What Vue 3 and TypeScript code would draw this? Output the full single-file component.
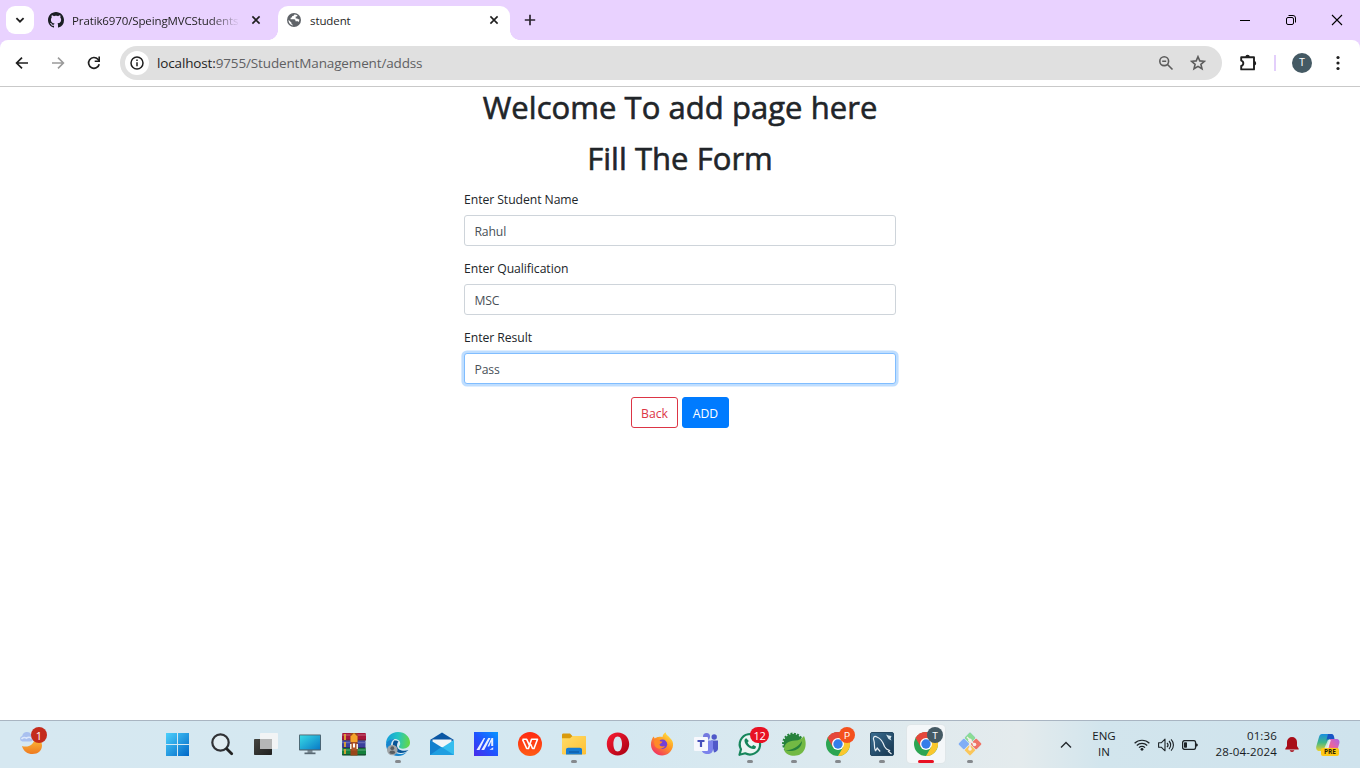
<script setup lang="ts">
import { ref } from 'vue'

interface Field {
  id: string
  label: string
  value: string
  focused?: boolean
}

const fields = ref<Field[]>([
  { id: 'name', label: 'Enter Student Name', value: 'Rahul' },
  { id: 'qualification', label: 'Enter Qualification', value: 'MSC' },
  { id: 'result', label: 'Enter Result', value: 'Pass', focused: true },
])
</script>

<template>
  <div class="screen">
    <header class="tabstrip">
      <button class="tab-search" aria-label="Search tabs">
        <svg width="10" height="10" viewBox="0 0 10 10"><path d="M1.4 3.2 5 6.7 8.6 3.2" fill="none" stroke="#1f1f1f" stroke-width="1.8" /></svg>
      </button>
      <div class="tab idle">
        <svg width="16" height="16" viewBox="0 0 16 16"><path fill="#1b1f24" d="M8 0C3.58 0 0 3.58 0 8c0 3.54 2.29 6.53 5.47 7.59.4.07.55-.17.55-.38 0-.19-.01-.82-.01-1.49-2.01.37-2.53-.49-2.69-.94-.09-.23-.48-.94-.82-1.13-.28-.15-.68-.52-.01-.53.63-.01 1.08.58 1.23.82.72 1.21 1.87.87 2.33.66.07-.52.28-.87.51-1.07-1.78-.2-3.64-.89-3.64-3.95 0-.87.31-1.59.82-2.15-.08-.2-.36-1.02.08-2.12 0 0 .67-.21 2.2.82.64-.18 1.32-.27 2-.27s1.36.09 2 .27c1.53-1.04 2.2-.82 2.2-.82.44 1.1.16 1.92.08 2.12.51.56.82 1.27.82 2.15 0 3.07-1.87 3.75-3.65 3.95.29.25.54.73.54 1.48 0 1.07-.01 1.93-.01 2.2 0 .21.15.46.55.38A8.01 8.01 0 0 0 16 8c0-4.42-3.58-8-8-8z" /></svg>
        <span class="tab-title faded">Pratik6970/SpeingMVCStudents</span>
        <svg class="close" width="10" height="10" viewBox="0 0 10 10"><path d="M1.4 1.4 8.600 8.600M8.600 1.400 1.400 8.600" stroke="#1f1f1f" stroke-width="1.600" /></svg>
      </div>
      <div class="tab active">
        <svg width="14" height="14" viewBox="0 0 14 14"><circle cx="7" cy="7" r="7" fill="#5f6368" /><path d="M7.300 1.600c-.2 1.200-1 1.500-2.200 1.600-.2 1-.6 1.500-1.500 1.600v1.500h3.600c1 0 1.300.8 1.300 1.900h1.700c.9 0 1.300.4 1.500 1 .5-1 .7-2 .5-3.100-.8.500-1.600.1-1.800-.7H8.700V3.600h1.400c0-.6.200-1 .5-1.200-1-.6-2.200-.9-3.300-.8zM1.500 6.700l3 3v.8c0 .6.500 1 1.200 1v1c-2.500-.5-4.400-2.800-4.200-5.800z" fill="#fff" /></svg>
        <span class="tab-title student">student</span>
        <svg class="close" width="10" height="10" viewBox="0 0 10 10"><path d="M1.400 1.400 8.600 8.600M8.600 1.400 1.400 8.600" stroke="#1f1f1f" stroke-width="1.600" /></svg>
      </div>
      <svg class="new-tab" width="12" height="12" viewBox="0 0 12 12"><path d="M6 .8v10.400M.8 6h10.400" stroke="#2b2530" stroke-width="1.700" /></svg>
      <div class="window-controls">
        <svg width="46" height="40" viewBox="0 0 46 40"><path d="M18 20.500h10" stroke="#000" /></svg>
        <svg width="46" height="40" viewBox="0 0 46 40"><g fill="none" stroke="#000"><rect x="18.500" y="17.500" width="7" height="7" rx="1.500" /><path d="M20.500 15.500h4.500a2.500 2.500 0 0 1 2.500 2.500v4.500" /></g></svg>
        <svg width="46" height="40" viewBox="0 0 46 40"><path d="M18 15l10 10M28 15 18 25" stroke="#000" stroke-width="1.100" /></svg>
      </div>
    </header>

    <nav class="toolbar">
      <svg class="nav-icon" width="16" height="16" viewBox="0 0 16 16"><path d="M14 8H3M8 2.600 2.600 8 8 13.400" fill="none" stroke="#1f1f1f" stroke-width="1.700" /></svg>
      <svg class="nav-icon" width="16" height="16" viewBox="0 0 16 16"><path d="M2 8h11M8 2.600 13.400 8 8 13.400" fill="none" stroke="#9a9a9a" stroke-width="1.600" /></svg>
      <svg class="nav-icon" width="16" height="16" viewBox="0 0 16 16"><path d="M13.200 9.200A5.400 5.400 0 1 1 12 4.300L13.400 5.700" fill="none" stroke="#1f1f1f" stroke-width="1.700" /><path d="M14 1.600V7H8.700V5.400h3.700V1.600z" fill="#1f1f1f" /></svg>
      <div class="omnibox">
        <span class="site-info"><svg width="14" height="14" viewBox="0 0 14 14"><circle cx="7" cy="7" r="6" fill="none" stroke="#1f1f1f" stroke-width="1.500" /><path d="M7 6.200v4M7 3.600v1.500" stroke="#1f1f1f" stroke-width="1.500" /></svg></span>
        <span class="url"><b>localhost:</b>9755/StudentManagement/addss</span>
        <svg class="zoom-icon" width="16" height="16" viewBox="0 0 16 16"><g fill="none" stroke="#5c5c5c" stroke-width="1.600"><circle cx="6.200" cy="6.200" r="4.400" /><path d="M9.500 9.500l5 5M4.200 6.200h4" /></g></svg>
        <svg class="star-icon" width="16" height="16" viewBox="0 0 16 16"><path d="M8 1.700 9.800 5.900l4.600.4-3.500 3 1.100 4.500L8 11.400l-4 2.400 1.100-4.500-3.500-3 4.600-.4z" fill="none" stroke="#5c5c5c" stroke-width="1.600" /></svg>
      </div>
      <svg class="ext-icon" width="18" height="18" viewBox="0 0 18 18"><path d="M2.200 3.200H15v12.200H2.200V12c2.800-.7 2.800-4.700 0-5.400z" fill="none" stroke="#1f1f1f" stroke-width="1.900" stroke-linejoin="round" /><path d="M6.400 3a2.200 2.200 0 0 1 4.400 0zM15 7.100a2.200 2.200 0 0 1 0 4.400z" fill="#1f1f1f" /></svg>
      <i class="divider"></i>
      <span class="profile">T</span>
      <svg class="kebab" width="4" height="16" viewBox="0 0 4 16"><g fill="#1f1f1f"><circle cx="2" cy="2.500" r="1.600" /><circle cx="2" cy="8" r="1.600" /><circle cx="2" cy="13.500" r="1.600" /></g></svg>
    </nav>

    <main class="page">
      <h1 class="welcome">Welcome To add page here</h1>
      <h1 class="fill">Fill The Form</h1>
      <form @submit.prevent>
        <div v-for="f in fields" :key="f.id" class="group">
          <label :for="f.id">{{ f.label }}</label>
          <input :id="f.id" v-model="f.value" type="text" :class="{ focused: f.focused }" />
        </div>
        <div class="actions">
          <button type="button" class="btn outline">Back</button>
          <button type="submit" class="btn primary">ADD</button>
        </div>
      </form>
    </main>

    <footer class="taskbar">
      <div class="weather">
        <svg width="28" height="28" viewBox="0 0 28 28">
          <defs><linearGradient id="moon" x1="0" y1="0" x2="0" y2="1"><stop offset="0" stop-color="#ffc23c" /><stop offset="1" stop-color="#ee7a20" /></linearGradient></defs>
          <path d="M3 18c6 2 12.500-1 13-9 4.500 1 7 4.500 7 8.500 0 5-4 8.500-9.500 8.500-5 0-9-2.500-10.500-8z" fill="url(#moon)" />
          <path d="M3.500 13.500a2.800 2.800 0 0 1-.3-5.500 4.900 4.900 0 0 1 9-1.600c1.800.5 2.300 2 2.200 3.600-.1 2-1.200 3.500-3 3.500z" fill="#a9c0ef" />
          <path d="M2.500 11c1.500-2 3.500-2 5-.7 1.500-1.600 4-1.500 5 .2" fill="none" stroke="#dce7fb" stroke-width="1.500" />
        </svg>
        <span class="badge red">1</span>
      </div>

      <div class="apps">
        <div class="app">
          <svg viewBox="0 0 24 24"><defs><linearGradient id="win" x1="0" y1="0" x2="1" y2="1"><stop offset="0" stop-color="#4cd0fc" /><stop offset="1" stop-color="#0067c7" /></linearGradient></defs><path d="M0 1h11v11H0zM12 1h11v11H12zM0 13h11v11H0zM12 13h11v11H12z" fill="url(#win)" /></svg>
        </div>
        <div class="app">
          <svg viewBox="0 0 24 24"><circle cx="10.500" cy="10.500" r="8.200" fill="#e1edf2" stroke="#303236" stroke-width="2.200" /><path d="M16.700 16.700l5 5" stroke="#222" stroke-width="2.800" stroke-linecap="round" /></svg>
        </div>
        <div class="app">
          <svg viewBox="0 0 24 24"><defs><linearGradient id="desk" x1="0" y1="0" x2="1" y2="1"><stop offset="0" stop-color="#454541" /><stop offset="1" stop-color="#20201f" /></linearGradient></defs><rect x="0" y="7" width="18" height="16" rx=".8" fill="url(#desk)" /><rect x="6" y="1" width="18" height="16" rx=".8" fill="#f2f4f5" /><path d="M6 7h12v10H6z" fill="#b5b6b6" /></svg>
        </div>
        <div class="app">
          <svg viewBox="0 0 24 24"><defs><linearGradient id="pc" x1="0" y1="0" x2="1" y2="1"><stop offset="0" stop-color="#38d9e5" /><stop offset="1" stop-color="#087ac6" /></linearGradient></defs><path d="M9.500 18h5v3h-5z" fill="#7d8b94" /><path d="M6.500 20.500h11v1.700h-11z" fill="#586873" /><rect x="1" y="2.500" width="22" height="16" rx=".8" fill="#50606b" /><rect x="1.900" y="3.400" width="20.200" height="14" fill="url(#pc)" /></svg>
        </div>
        <div class="app">
          <svg viewBox="0 0 24 24"><rect x="0" y="1" width="24" height="7.500" rx="1.200" fill="#a5163a" /><rect x="0" y="8.500" width="23.500" height="7.500" rx="1.200" fill="#3a3f9e" /><rect x="0" y="16" width="24" height="7.500" rx="1.200" fill="#14803c" /><path d="M0 3h24M0 10.500h23M0 18h24" stroke="#fff" stroke-opacity=".22" stroke-width="1.300" /><path d="M0 8.200h24M0 15.800h24M0 22.800h24" stroke="#22152a" stroke-opacity=".6" /><path d="M3 2v6M3 10v5M3 17v5" stroke="#e0a632" stroke-width="1.800" /><rect x="8.500" y="1" width="7" height="22.500" fill="#99461a" /><path d="M8.500 4.500 12 1l3.500 3.500v5.500h-7z" fill="#f4a32b" /><path d="M8 12h8v5H8z" fill="#f6edda" /><path d="M9.500 10.500h5v8h-5z" fill="#ae5428" /><path d="M11 11.500h2v4h-2z" fill="#fff" /></svg>
        </div>
        <div class="app running">
          <svg viewBox="0 0 24 24"><defs><linearGradient id="edgeTop" x1="0" y1=".3" x2="1" y2=".4"><stop offset="0" stop-color="#139bdd" /><stop offset=".5" stop-color="#24c5c3" /><stop offset="1" stop-color="#65d846" /></linearGradient></defs><path d="M0 12C0 5 5 0 12 0s12 5 12 10.500c0 4-3.300 6.200-7 6.200-3 0-4-1.200-4-2 0-1 1.200-1.500 1.200-3.300C14.200 8.500 11.500 7 8.700 7 4.500 7 1.500 9.500 0 12z" fill="url(#edgeTop)" /><path d="M0 12c1.500-4 5-5 8.500-5-2.500 1.300-3.500 4-3.500 6 0 5 4 9 9 9 2.500 0 5-.6 7-2.500C19 22.500 15.500 24 12 24 5 24 0 19 0 12z" fill="#1685ce" /><path d="M8.200 8.500C5 12 7.500 21.500 15 21c3 0 5.500-1.300 7.500-3-5 1.800-11.500.2-11.500-4.500 0-2.500 1.500-4 1.500-4-1-.8-2.800-1.300-4.300-1z" fill="#075496" /><circle cx="6.300" cy="18" r="5.300" fill="#a0a4a7" /><circle cx="6.300" cy="16.200" r="1.900" fill="#595d61" /><path d="M3.300 21c.5-3.200 5.500-3.200 6 0-1.500 1.400-4.500 1.400-6 0z" fill="#595d61" /></svg>
        </div>
        <div class="app">
          <svg viewBox="0 0 24 24"><path d="M0 8 12 .5 24 8l-12 7.500z" fill="#0b57a4" /><path d="M2.500 7.500h19v6L12 18 2.500 12z" fill="#f1f5f8" /><path d="M0 8l24 15H0z" fill="#1480ce" /><path d="M24 8v15L6 19.500z" fill="#35bdee" /><path d="M0 23 11.500 15 24 23z" fill="#1f9ee1" /></svg>
        </div>
        <div class="app">
          <svg viewBox="0 0 24 24"><defs><linearGradient id="armoury" x1="0" y1="1" x2="1" y2="0"><stop offset="0" stop-color="#492bea" /><stop offset=".5" stop-color="#1f55ff" /><stop offset="1" stop-color="#0796ff" /></linearGradient></defs><rect width="24" height="24" fill="url(#armoury)" /><path d="M2.500 18 9.700 6h1.500L5.500 18zM7.300 18l7-12h2.200l-6.300 12z" fill="#e9efff" /><path d="M13.500 14.500 17.500 6h1.700v8h-2V9.500l-2 5zM15.500 17.800l3.700-2.500v2.500z" fill="#e9efff" /></svg>
        </div>
        <div class="app">
          <svg viewBox="0 0 24 24"><defs><linearGradient id="wps" x1="0" y1="0" x2="0" y2="1"><stop offset="0" stop-color="#ff2a12" /><stop offset="1" stop-color="#ff5a14" /></linearGradient></defs><circle cx="12" cy="12" r="12" fill="url(#wps)" /><path d="M4.500 7.300h4.200l3 6.500M4.500 7.300l4.200 9.200h1.800l3-9.200h6l-3.500 9.200h-1.500l-2.600-6" fill="none" stroke="#fff" stroke-width="1.600" stroke-linejoin="round" /></svg>
        </div>
        <div class="app running">
          <svg viewBox="0 0 24 24"><defs><linearGradient id="folder" x1="0" y1="0" x2="1" y2="1"><stop offset="0" stop-color="#ffdc68" /><stop offset="1" stop-color="#ffc034" /></linearGradient></defs><path d="M0 3c0-1 .5-1.500 1.500-1.500h6.500L10.300 4H22c1.200 0 2 .7 2 2v16H0z" fill="#d99a0d" /><path d="M0 6.200h8l2.500-2.200H22.500c1 0 1.500.5 1.500 1.500V21c0 1-.5 1.500-1.500 1.500h-21C.5 22.500 0 22 0 21z" fill="url(#folder)" /><path d="M4 22.500V18c0-1.500.8-2.200 2.200-2.200h11.500c1.500 0 2.300.7 2.300 2.200v4.500z" fill="#167bd1" /><path d="M7 19.500h10v1H7z" fill="#075398" /></svg>
        </div>
        <div class="app">
          <svg viewBox="0 0 24 24"><defs><linearGradient id="opera" x1="0" y1="0" x2="1" y2="1"><stop offset="0" stop-color="#fb1d35" /><stop offset="1" stop-color="#a60010" /></linearGradient></defs><path d="M11.700.5C5 .5.800 5.500.800 12s4.200 11.500 10.900 11.500S23.200 18.500 23.200 12 18.400.500 11.700.500zm0 4C14.500 4.500 16 8 16 12s-1.500 7.500-4.300 7.500S7.400 16 7.400 12s1.500-7.500 4.300-7.500z" fill="url(#opera)" fill-rule="evenodd" /></svg>
        </div>
        <div class="app">
          <svg viewBox="0 0 24 24"><defs><linearGradient id="fox" x1=".9" y1="0" x2=".2" y2="1"><stop offset="0" stop-color="#fff04a" /><stop offset=".45" stop-color="#ff9a22" /><stop offset="1" stop-color="#f02867" /></linearGradient></defs><path d="M3.400 4.500C4 5 4.500 5.800 4.800 6.500 6 5.500 7.500 5 8.500 5c1-.4 2.500-.4 4 .1.300-2 1.300-3.800 3.200-4.800 0 2.500 2.500 3.500 4.500 6C22.700 8.500 23.300 11 23 13.500 22.300 19.500 17.500 23.500 12 23.500S1.300 19 1 13c-.1-3.500.8-6 2.400-8.500z" fill="url(#fox)" /><circle cx="12.500" cy="12.200" r="4.700" fill="#7440d6" /><path d="M4 9c2-2 5-1.500 6.500.5h2c-.3 1.500-2.500 2-3 3 .2 2 3 2.500 5.500 1.500C13 17.500 6 18 4.500 13z" fill="#ff8a28" /></svg>
        </div>
        <div class="app">
          <svg viewBox="0 0 24 24"><circle cx="12.500" cy="4.500" r="3.500" fill="#7379df" /><circle cx="20.200" cy="5" r="2.700" fill="#5059c9" /><path d="M17 8.500h7v8c0 2-1.500 3.500-4 4z" fill="#5059c9" /><path d="M7.500 8.500H19V17c0 3-2 5-5.500 5s-6-2-6-5z" fill="#7b83eb" /><rect x="0" y="5" width="14" height="14" rx="1" fill="#f7f8fd" /><path d="M3.500 8h7v1.900H8.100V15H5.900V9.900H3.500z" fill="#4650bb" /></svg>
        </div>
        <div class="app running">
          <svg viewBox="0 0 24 24"><path d="M1.500 22.800 3 17.200A10.200 10.200 0 1 1 7.200 21.300z" fill="#eaf5f2" stroke="#16865b" stroke-width="2.200" stroke-linejoin="round" /><path d="M8.300 6.300c-.8 0-2 1.200-1.800 2.800.5 4 5 8 9 8 1.500 0 2.500-1.200 2.500-2.700l-2.700-1.500-1.500 1.600c-2-.6-3.500-2-4.200-3.900l1.200-1.500z" fill="#16865b" /></svg>
          <span class="badge crimson">12</span>
        </div>
        <div class="app running">
          <svg viewBox="0 0 24 24"><circle cx="11" cy="11.500" r="9.400" fill="#26823c" stroke="#26823c" stroke-width="3" stroke-dasharray="1.900 1.300" /><circle cx="11" cy="11.500" r="9.200" fill="#26823c" /><path d="M2.500 19C1 11.500 7 8.700 13 8.500c4 0 7-2 9-4.500 4 9 1 19.500-9.500 19.800C8 24 4 22 2.500 19z" fill="#72b944" /><path d="M3.500 18C9 18.500 16 15.500 20 9 20 16.500 12 21 3.500 18z" fill="#26823c" /></svg>
        </div>
        <div class="app running">
          <svg viewBox="0 0 24 24"><circle cx="12" cy="12" r="12" fill="#2ca552" /><path d="M12 12 1.600 6A12 12 0 0 1 22.400 6z" fill="#e5473b" /><path d="M12 6h10.400A12 12 0 0 1 12 24l5.200-9z" fill="#fac72d" /><path d="M1.600 6A12 12 0 0 1 12 0v6L6.800 15z" fill="#e5473b" /><circle cx="12" cy="12" r="6" fill="#fff" /><circle cx="12" cy="12" r="4.700" fill="#357de9" /></svg>
          <span class="badge orange">P</span>
        </div>
        <div class="app running">
          <svg viewBox="0 0 24 24"><defs><linearGradient id="sql" x1="0" y1="0" x2="1" y2="1"><stop offset="0" stop-color="#3a6d91" /><stop offset="1" stop-color="#16354e" /></linearGradient></defs><rect x=".5" y=".5" width="23" height="23" rx="1.500" fill="url(#sql)" stroke="#244862" /><path d="M5.500 19C3.500 15 5 12 4 9 2.500 5.500 4 3.500 7 5c3.500 1.500 6 5 7.500 9.500l2 2.500 3 1.500-1 1 3 2.500M5.500 19l1.700-3 3 3.500" fill="none" stroke="#e5edf2" stroke-width="1.200" /><path d="M16 2.500l2.500 1 3 .5-1 2.500 1 2-3-1.500z" fill="#d4e6ee" /></svg>
        </div>
        <div class="app current">
          <svg viewBox="0 0 24 24"><circle cx="12" cy="12" r="12" fill="#2ca552" /><path d="M12 12 1.600 6A12 12 0 0 1 22.400 6z" fill="#e5473b" /><path d="M12 6h10.400A12 12 0 0 1 12 24l5.200-9z" fill="#fac72d" /><path d="M1.600 6A12 12 0 0 1 12 0v6L6.800 15z" fill="#e5473b" /><circle cx="12" cy="12" r="6" fill="#fff" /><circle cx="12" cy="12" r="4.700" fill="#357de9" /></svg>
          <span class="badge slate">T</span>
        </div>
        <div class="app running">
          <svg viewBox="0 0 24 24"><g transform="rotate(45 12 12)"><rect x="3.700" y="3.700" width="7.900" height="7.900" rx="1" fill="#80aef6" /><rect x="12.400" y="3.700" width="7.900" height="7.900" rx="1" fill="#ef7467" /><rect x="3.700" y="12.400" width="7.900" height="7.900" rx="1" fill="#80aef6" /><rect x="12.400" y="12.400" width="7.900" height="7.900" rx="1" fill="#fac65a" /><rect x="3.700" y="3.700" width="7.900" height="7.900" rx="1" fill="#8bdc94" /></g><path d="M9 5l3 3v9M12 8.500l4.500 4" fill="none" stroke="#f7efec" stroke-width="1.400" /><g fill="#f7efec"><circle cx="12" cy="8.300" r="1.800" /><circle cx="16.500" cy="12.500" r="1.800" /><circle cx="12" cy="17" r="1.800" /></g></svg>
        </div>
      </div>

      <div class="tray">
        <svg class="chev" width="12" height="8" viewBox="0 0 12 8"><path d="M1 6.500 6 1.500l5 5" fill="none" stroke="#24292d" stroke-width="1.400" /></svg>
        <div class="lang"><span>ENG</span><span>IN</span></div>
        <svg class="wifi" width="16" height="12" viewBox="0 0 16 12"><g fill="none" stroke="#1d2327" stroke-width="1.200"><path d="M.6 4.300a10.500 10.500 0 0 1 14.800 0M2.800 6.500a7.400 7.400 0 0 1 10.400 0M5 8.700a4.200 4.200 0 0 1 6 0" /></g><circle cx="8" cy="10.300" r="1.400" fill="#1d2327" /></svg>
        <svg class="sound" width="16" height="14" viewBox="0 0 16 14"><g fill="none" stroke="#1d2327" stroke-width="1.100"><path d="M.6 4.800h2.600L7 1.200v11.600L3.200 9.200H.6z" stroke-linejoin="round" /><path d="M9 4.800c1.200 1.200 1.200 3.200 0 4.400M11 3c2.200 2.200 2.200 5.800 0 8M13.100 1.300c3.100 3.300 3.100 8.100 0 11.400" /></g></svg>
        <svg class="battery" width="16" height="10" viewBox="0 0 16 10"><rect x=".6" y=".6" width="13" height="8.800" rx="2" fill="none" stroke="#1d2327" stroke-width="1.300" /><rect x="2" y="2.200" width="3" height="5.600" rx=".8" fill="#1d2327" /><path d="M14 3.500h.7c1.500.5 1.500 2.500 0 3H14z" fill="#1d2327" /></svg>
        <div class="clock"><span>01:36</span><span>28-04-2024</span></div>
        <svg class="bell" width="14" height="16" viewBox="0 0 14 16"><path d="M7 0a5 5 0 0 0-5 5v4L.3 11.700v.8h13.400v-.8L12 9V5a5 5 0 0 0-5-5zM4.600 13.300a2.500 2.500 0 0 0 4.800 0z" fill="#a80d18" /></svg>
        <div class="copilot">
          <svg width="24" height="24" viewBox="0 0 24 24"><defs><linearGradient id="cpl" x1="0" y1="0" x2="0" y2="1"><stop offset="0" stop-color="#178ee0" /><stop offset=".5" stop-color="#41b787" /><stop offset="1" stop-color="#e9d22f" /></linearGradient><linearGradient id="cpr" x1="1" y1="0" x2="0" y2="1"><stop offset="0" stop-color="#a965e7" /><stop offset=".5" stop-color="#ed659b" /><stop offset="1" stop-color="#f99155" /></linearGradient></defs><path d="M6 1h9l-4 14c-.5 2-1.500 3-3.500 3H4c-3 0-4.500-2-3.600-5L3 4c.5-2 1.500-3 3-3z" fill="url(#cpl)" /><path d="M12 1h3.500c2 0 2.500 1.500 3 5H13c-1.500 0-2.500 1-3 3z" fill="#1855c5" /><path d="M14 6h6c3 0 4 2 3.300 4.500L21 18c-.8 3-2 4-4 4H9c2 0 2.500-2 3-4z" fill="url(#cpr)" /><path d="M12 7h3l-3 9H8z" fill="#f3f4fa" opacity=".75" /></svg>
          <span class="pre">PRE</span>
        </div>
      </div>
    </footer>
  </div>
</template>

<style>
html,
body {
  margin: 0;
  overflow: hidden;
}
</style>

<style scoped>
.screen {
  width: 1360px;
  height: 768px;
  display: flex;
  flex-direction: column;
  background: #fff;
  overflow: hidden;
  font-family: "Open Sans", "Noto Sans", sans-serif;
  color: #1f1f1f;
}
.screen * { box-sizing: border-box; }
svg { display: block; flex: none; }

.tabstrip {
  height: 40px;
  flex: none;
  display: flex;
  align-items: center;
  background: #e9d2ff;
  padding-left: 6px;
}
.tab-search {
  width: 28px;
  height: 28px;
  padding: 0;
  border: 0;
  border-radius: 9px;
  background: #fff;
  display: flex;
  align-items: center;
  justify-content: center;
}
.tab { display: flex; align-items: center; white-space: nowrap; }
.tab.idle { width: 244px; height: 40px; padding: 0 17px 0 14px; }
.tab-title { font-size: 11.5px; line-height: 16px; margin-left: 8px; padding-top: 1px; }
.student { margin-left: 9px; letter-spacing: -0.1px; }
.faded {
  width: 168px;
  overflow: hidden;
  letter-spacing: -0.12px;
  mask-image: linear-gradient(90deg, #000 82%, transparent);
}
.close { margin-left: auto; }
.tab.active {
  position: relative;
  width: 232px;
  height: 34px;
  margin-top: 6px;
  padding: 0 11px 6px 9px;
  border-radius: 10px 10px 0 0;
  background: #fff;
}
.tab.active::before,
.tab.active::after {
  content: "";
  position: absolute;
  bottom: 0;
  width: 10px;
  height: 10px;
}
.tab.active::before { left: -10px; background: radial-gradient(circle at 0 0, transparent 9.6px, #fff 10.2px); }
.tab.active::after { right: -10px; background: radial-gradient(circle at 100% 0, transparent 9.6px, #fff 10.2px); }
.new-tab { margin-left: 14px; }
.window-controls { margin-left: auto; display: flex; }

.toolbar {
  height: 47px;
  flex: none;
  display: flex;
  align-items: center;
  padding: 0 20px 0 14px;
  background: linear-gradient(#e9d2ff, #e9d2ff) 0 0 / 100% 8px no-repeat;
  position: relative;
  z-index: 0;
  border-bottom: 1px solid #c9c9c9;
}
.toolbar::before {
  content: "";
  position: absolute;
  inset: 0;
  z-index: -1;
  background: #fff;
  border-radius: 8px 8px 0 0;
}
.nav-icon { margin-right: 20px; }
.omnibox {
  width: 1102px;
  height: 34px;
  margin-left: -2px;
  border-radius: 17px;
  background: #e0e0e0;
  display: flex;
  align-items: center;
  padding: 0 16px 0 5px;
}
.site-info {
  width: 24px;
  height: 24px;
  border-radius: 50%;
  background: #fff;
  display: flex;
  align-items: center;
  justify-content: center;
}
.url { margin-left: 8px; font-size: 13.5px; letter-spacing: -0.14px; color: #5f6063; white-space: nowrap; }
.url b { font-weight: 400; color: #1f1f1f; }
.zoom-icon { margin-left: auto; }
.star-icon { margin-left: 16px; }
.ext-icon { margin-left: 17px; }
.divider { width: 2px; height: 16px; margin-left: 17px; background: #e3cffb; }
.profile {
  width: 20px;
  height: 20px;
  margin-left: 16px;
  border-radius: 50%;
  background: #455a64;
  color: #fff;
  font: 10px/20px Roboto, sans-serif;
  text-align: center;
}
.kebab { margin-left: auto; }

.page { flex: 1; text-align: center; color: #212529; }
h1 {
  margin: 0;
  font-weight: 500;
  font-size: 31px;
  line-height: 38px;
  letter-spacing: 0.05px;
  white-space: nowrap;
  -webkit-text-stroke: 0.6px #212529;
}
.welcome { margin-top: 1px; }
.fill { margin-top: 13px; }
form { width: 432px; margin: 14px auto 0; text-align: left; }
.group { height: 69px; display: flex; flex-direction: column; }
label { height: 24px; font-size: 12.2px; line-height: 17px; letter-spacing: -0.06px; }
input {
  width: 100%;
  height: 31px;
  padding: 1px 10px 0 9.500px;
  border: 1px solid #ced4da;
  border-radius: 3px;
  outline: 0;
  color: #495057;
  background: #fff;
  font: 12.2px "Open Sans", sans-serif;
  letter-spacing: -0.15px;
}
input.focused { border-color: #80bdff; box-shadow: 0 0 0 2.600px rgba(0, 123, 255, 0.25); }
.actions { display: flex; justify-content: center; gap: 4px; margin-top: -1px; }
.btn {
  width: 47px;
  height: 31px;
  padding: 1px 0 0;
  border: 1px solid;
  border-radius: 3px;
  font: 12.2px "Open Sans", sans-serif;
}
.outline { color: #dc3545; border-color: #dc3545; background: #fff; }
.primary { color: #fff; border-color: #007bff; background: #007bff; }

.taskbar {
  height: 48px;
  flex: none;
  display: flex;
  align-items: center;
  border-top: 1px solid #a9b5c2;
  background: linear-gradient(90deg, #d6e8f1 0, #d4e8f1 45%, #dbe9ef 60%, #e4ebed 75%, #d2e5ed 81%, #cfe3ed 100%);
}
.weather { position: relative; width: 28px; height: 28px; margin-left: 19px; margin-top: -5px; }
.badge {
  position: absolute;
  display: flex;
  align-items: center;
  justify-content: center;
  border-radius: 9px;
  color: #fff;
}
.weather .badge { left: 12px; top: -1px; width: 16px; height: 16px; font-size: 11px; }
.red { background: #c42b1c; }
.apps { display: flex; margin-left: 109px; }
.app { position: relative; width: 44px; height: 47px; display: flex; justify-content: center; padding-top: 11px; }
.app svg { width: 24px; height: 24px; overflow: visible; position: relative; }
.running::after,
.current::after {
  content: "";
  position: absolute;
  left: 19px;
  bottom: 5px;
  width: 6px;
  height: 3px;
  border-radius: 2px;
  background: #85898d;
}
.current::after { left: 14px; width: 16px; background: #e81123; }
.current::before {
  content: "";
  position: absolute;
  left: 3px;
  top: 4px;
  width: 38px;
  height: 38px;
  border-radius: 4px;
  background: #f4f7f9;
  box-shadow: 0 0 0 1px #dfe6e9;
}
.app .badge { right: 3px; top: 6px; width: 19px; height: 16px; font-size: 11px; letter-spacing: -0.3px; }
.app .orange,
.app .slate { width: 16px; right: 5px; font: 9.5px Roboto, sans-serif; letter-spacing: 0; }
.crimson { background: #e81123; }
.orange { background: #f4511e; }
.slate { background: #455a64; }

.tray { margin-left: auto; display: flex; align-items: center; color: #171b1e; }
.lang,
.clock { display: flex; flex-direction: column; font-size: 11.5px; line-height: 16px; padding-bottom: 1px; }
.lang { align-items: center; width: 30px; margin-left: 17px; }
.wifi { margin-left: 15px; }
.sound { margin-left: 8px; }
.battery { margin-left: 8px; }
.clock { align-items: flex-end; width: 79px; letter-spacing: 0.15px; }
.bell { margin-left: 8px; }
.copilot { position: relative; width: 24px; height: 24px; margin: 0 20px 0 17px; }
.pre {
  position: absolute;
  left: 5px;
  top: 15px;
  width: 18px;
  height: 8px;
  border-radius: 2px;
  background: #ffc916;
  color: #2c2300;
  font: 700 6.500px/8px "Open Sans", sans-serif;
  text-align: center;
}
</style>
